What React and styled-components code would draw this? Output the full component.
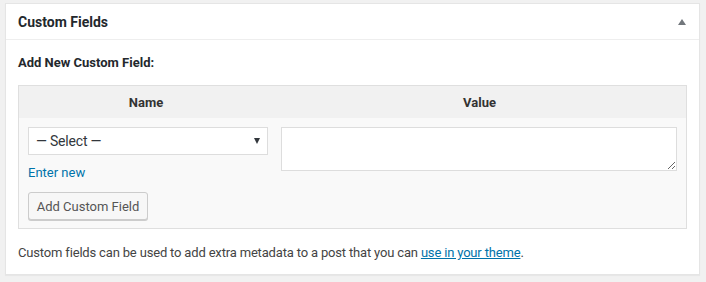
import React from 'react';
import styled, { createGlobalStyle } from 'styled-components';

const GlobalStyle = createGlobalStyle`
  html, body {
    margin: 0;
    padding: 0;
    background: #f1f1f1;
    font-family: Roboto, "Liberation Sans", Arial, sans-serif;
    font-size: 13px;
    color: #444;
  }
`;

const Page = styled.div`
  padding: 3px 6px 7px 5px;
`;

const Postbox = styled.div`
  background: #fff;
  border: 1px solid #e5e5e5;
  box-shadow: 0 1px 1px rgba(0, 0, 0, 0.04);
`;

const Header = styled.div`
  display: flex;
  align-items: center;
  justify-content: space-between;
  height: 35px;
  padding: 0 12px;
  border-bottom: 1px solid #eee;
`;

const Title = styled.h2`
  margin: 0;
  font-size: 14px;
  font-weight: 700;
  color: #23282d;
`;

const Toggle = styled.span`
  width: 0;
  height: 0;
  border-left: 4px solid transparent;
  border-right: 4px solid transparent;
  border-bottom: 6px solid #72777c;
  margin-right: 1px;
`;

const Inside = styled.div`
  padding: 14px 12px 12px;
`;

const Heading = styled.p`
  margin: 0 0 13px;
  font-weight: 700;
  color: #23282d;
  line-height: 18px;
`;

const Table = styled.div`
  border: 1px solid #dfdfdf;
  background: #f9f9f9;
  display: grid;
  grid-template-columns: 254px 1fr;
`;

const Th = styled.div`
  background: #f1f1f1;
  height: 32px;
  display: flex;
  align-items: center;
  justify-content: center;
  font-weight: 700;
  color: #333;
`;

const Td = styled.div`
  padding: ${(p) => p.$pad};
  display: flex;
  flex-direction: column;
  align-items: flex-start;
`;

const SelectBox = styled.div`
  box-sizing: border-box;
  width: 240px;
  height: 28px;
  background: #fff;
  border: 1px solid #ddd;
  display: flex;
  align-items: center;
  justify-content: space-between;
  padding: 0 7px 0 7px;
  font-size: 14px;
  letter-spacing: -0.2px;
  color: #32373c;
`;

const Arrow = styled.span`
  width: 0;
  height: 0;
  border-left: 3.5px solid transparent;
  border-right: 3.5px solid transparent;
  border-top: 6px solid #32373c;
`;

const Link = styled.a`
  color: #0073aa;
  text-decoration: ${(p) => (p.$underline ? 'underline' : 'none')};
`;

const EnterNew = styled(Link)`
  margin-top: 9px;
  line-height: 17px;
`;

const Button = styled.button`
  margin-top: 11px;
  box-sizing: border-box;
  width: 120px;
  height: 28px;
  background: #f7f7f7;
  border: 1px solid #ccc;
  border-radius: 3px;
  box-shadow: 0 1px 0 #ccc;
  font-family: inherit;
  font-size: 13px;
  color: #555;
  padding: 0;
  white-space: nowrap;
`;

const Textarea = styled.textarea`
  box-sizing: border-box;
  width: 396px;
  height: 44px;
  border: 1px solid #ddd;
  background: #fff;
  margin: 0;
  resize: vertical;
  font-family: inherit;
`;

const Note = styled.p`
  margin: 15px 0 0;
  line-height: 18px;
  letter-spacing: -0.17px;
  color: #444;
`;

export default function App() {
  return (
    <Page>
      <GlobalStyle />
      <Postbox>
        <Header>
          <Title>Custom Fields</Title>
          <Toggle />
        </Header>
        <Inside>
          <Heading>Add New Custom Field:</Heading>
          <Table>
            <Th>Name</Th>
            <Th>Value</Th>
            <Td $pad="9px 5px 8px 9px">
              <SelectBox>
                <span>— Select —</span>
                <Arrow />
              </SelectBox>
              <EnterNew href="#">Enter new</EnterNew>
              <Button type="button">Add Custom Field</Button>
            </Td>
            <Td $pad="9px 9px 8px 8px">
              <Textarea />
            </Td>
          </Table>
          <Note>
            Custom fields can be used to add extra metadata to a post that you can{' '}
            <Link href="#" $underline>use in your theme</Link>.
          </Note>
        </Inside>
      </Postbox>
    </Page>
  );
}
